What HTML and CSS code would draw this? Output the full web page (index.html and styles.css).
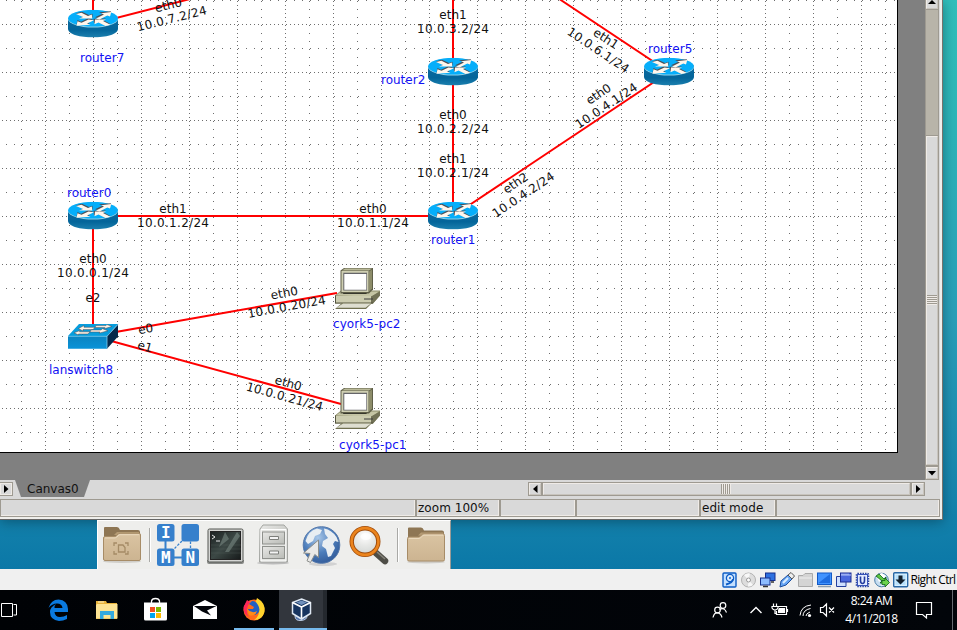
FILE: index.html
```html
<!DOCTYPE html>
<html lang="en">
<head>
<meta charset="utf-8">
<title>Network canvas</title>
<link rel="stylesheet" href="styles.css">
</head>
<body>
<main class="guest">
  <section class="app">
    <div class="work">
      <div class="viewport">
        <svg class="canvas" width="925" height="480" viewBox="0 0 925 480">
          <defs>
            <pattern id="grid" width="48" height="48" patternUnits="userSpaceOnUse">
              <g stroke="#6e6e6e" fill="none" shape-rendering="crispEdges">
                <path d="M45.5 1V48M2 24.5H48" stroke-dasharray="1 3"/>
                <path d="M21.5 1V48M6 .5H48" stroke-dasharray="1 7"/>
              </g>
            </pattern>
            <linearGradient id="side" x1="0" x2="0" y1="0" y2="1"><stop offset="0" stop-color="#0c6aa0"/><stop offset=".6" stop-color="#04659a"/><stop offset="1" stop-color="#1b7fae"/></linearGradient>
            <linearGradient id="face" x1="0" x2="0" y1="0" y2="1"><stop offset="0" stop-color="#0b83c0"/><stop offset="1" stop-color="#0a93d8"/></linearGradient>
            <symbol id="router" viewBox="0 0 50 28">
              <path d="M0 9V19C0 30.500 50 30.500 50 19V9Z" fill="url(#side)"/>
              <ellipse cx="25" cy="9.200" rx="25" ry="8.700" fill="#8ed0e8"/>
              <ellipse cx="25" cy="8.500" rx="24.800" ry="8.400" fill="#06aefa"/>
              <g fill="#4b5058">
                <path d="M8 3.600 14 2 21 5.400 24.500 4V8L12 7.800 15 6.700Z"/>
                <path d="M27 7.600 34.500 4 31 2.600 43 1.500 41.500 6 38 4.600 31 8.500Z"/>
                <path d="M20 8.600 13 12 9.500 10.200 8.500 15 22 14 18 12.600 25 9.600Z"/>
                <path d="M25.500 9 38 8.800 35 10.400 42 14 37 15.500 30 12 26 13.500Z"/>
              </g>
              <g fill="#fff6ec">
                <path d="M8 4.400 13.500 3 20 6.200 23.800 4.700 24.300 8.800 11 8.900 15 7.400Z"/>
                <path d="M28 8.700 36 4.900 33 3.500 43.300 2.200 42 6.800 39.300 5.700 31.500 9.700Z"/>
                <path d="M20.500 9.700 13.500 13 9.500 11.600 8.500 16 22.500 15.100 19 13.800 26 10.500Z"/>
                <path d="M27 9.900 38 9.700 35 11.300 42.500 15 37.500 16.300 30.500 12.900 26.500 14.500Z"/>
              </g>
            </symbol>
            <symbol id="pc" viewBox="0 0 46 43">
              <path d="M0 28 6 23H45V28L38 36H0Z" fill="#8b8b68"/>
              <path d="M1 28 6 24H44L37 29Z" fill="#c4c4a4"/>
              <path d="M8 26.500H31L35.500 23V21H10Z" fill="#111"/>
              <path d="M5.500 3 9 .5H38V22L34 26H5.500Z" fill="#5f5f48"/>
              <path d="M7 3 10 1H37L34 3Z" fill="#b9b998"/>
              <path d="M34 4 37 2V21L34 24Z" fill="#8c8c69"/>
              <path d="M6.500 3.500H33.500V24.500H6.500Z" fill="#cfcfb2"/>
              <path d="M8.300 5.300H32V23H8.300Z" fill="#66666a"/>
              <path d="M9.300 6.500H31.300V22.300H9.300Z" fill="#fff"/>
              <path d="M1 28.500H36V35.500H1Z" fill="#cdcdb0"/>
              <path d="M36 29 45 24V28L38 36H36Z" fill="#717156"/>
              <path d="M1 35.500H38M.5 28V36" stroke="#55553f"/>
              <path d="M29 31.500H38" stroke="#3d3d3d"/>
              <path d="M7 35.500H37L31 41.500H0Z" fill="#70704f"/>
              <path d="M8 36H36L30.500 40.200H1.500Z" fill="#deded0"/>
            </symbol>
          </defs>
          <rect width="898" height="453" fill="#000"/>
          <rect width="897" height="452" fill="#fff"/>
          <rect width="896" height="451" fill="url(#grid)"/>
          <path class="link" d="M93 0V24L190-1M453 0V216H93V336L337 293M93 336 341 404M453 216 669 72 560-.5"/>
          <g class="iface">
            <g transform="translate(170 12) rotate(-14)"><text y="-3">eth0</text><text y="11" textLength="71.500">10.0.7.2/24</text></g>
            <g transform="translate(453 22)"><text y="-3">eth1</text><text y="11" textLength="72">10.0.3.2/24</text></g>
            <g transform="translate(453 122)"><text y="-3">eth0</text><text y="11" textLength="72">10.0.2.2/24</text></g>
            <g transform="translate(453 166)"><text y="-3">eth1</text><text y="11" textLength="72">10.0.2.1/24</text></g>
            <g transform="translate(602 44.500) rotate(33.700)"><text y="-3">eth1</text><text y="11" textLength="71.500">10.0.6.1/24</text></g>
            <g transform="translate(602.500 100) rotate(-33.700)"><text y="-3">eth0</text><text y="11" textLength="71.500">10.0.4.1/24</text></g>
            <g transform="translate(519.500 189) rotate(-33.700)"><text y="-3">eth2</text><text y="11" textLength="71.500">10.0.4.2/24</text></g>
            <g transform="translate(173 216)"><text y="-3">eth1</text><text y="11" textLength="72">10.0.1.2/24</text></g>
            <g transform="translate(373 216)"><text y="-3">eth0</text><text y="11" textLength="72">10.0.1.1/24</text></g>
            <g transform="translate(93 266)"><text y="-3">eth0</text><text y="11" textLength="72">10.0.0.1/24</text></g>
            <g transform="translate(285.500 300) rotate(-10.300)"><text y="-3">eth0</text><text y="11" textLength="79">10.0.0.20/24</text></g>
            <g transform="translate(286.500 390) rotate(15.300)"><text y="-3">eth0</text><text y="11" textLength="79">10.0.0.21/24</text></g>
            <text x="93" y="302">e2</text>
            <text transform="translate(146.300 333) rotate(-10.300)">e0</text>
            <text transform="translate(144 350.500) rotate(15.300)">e1</text>
          </g>
          <use href="#router" x="68" y="9.700" width="50" height="28"/>
          <use href="#router" x="428" y="57.700" width="50" height="28"/>
          <use href="#router" x="644" y="57.700" width="50" height="28"/>
          <use href="#router" x="68" y="201.700" width="50" height="28"/>
          <use href="#router" x="428" y="201.700" width="50" height="28"/>
          <use href="#pc" x="335" y="267.500" width="46" height="43"/>
          <use href="#pc" x="335" y="387.500" width="46" height="43"/>
          <g>
            <path d="M107 336 118 324V336.500L107 348.700Z" fill="#06284a"/>
            <path d="M68 336H107V348.700H68Z" fill="url(#face)"/>
            <path d="M68 336 79 324H118L107 336Z" fill="#079ddd"/>
            <path d="M68 336.300H107L118 324.500M107 336V348" stroke="#7fcdf0" fill="none" stroke-width=".8"/>
            <g fill="#fff3e6" stroke="#4b4b55" stroke-width=".5">
              <path d="M78.500 328.500 84 325.500V327.300H95L93 329.600H83V331Z"/>
              <path d="M96 325.600H106L107 324.600 112 326.500 104 328.800 105 327.600H95Z"/>
              <path d="M74 332.800 80 330.500 79.500 331.800H90L88 334H78.500V335Z"/>
              <path d="M91 330H101L102.500 328.700 108 330.800 99 333.200 100 332H90Z"/>
            </g>
          </g>
          <g class="node-name">
            <text x="80" y="62">router7</text><text x="67" y="197">router0</text>
            <text x="381" y="84">router2</text><text x="648" y="53">router5</text>
            <text x="431" y="244">router1</text><text x="49" y="374">lanswitch8</text>
            <text x="333" y="328" textLength="67.500">cyork5-pc2</text><text x="339" y="449" textLength="67.500">cyork5-pc1</text>
          </g>
        </svg>
      </div>
      <div class="vscroll">
        <div class="btn up"><svg width="8" height="5" viewBox="0 0 8 5"><path d="M4 0 8 4H0Z"/></svg></div>
        <div class="trough"></div>
        <div class="thumb"><i></i><i></i><i></i><i></i><i></i></div>
        <div class="btn"><svg width="8" height="5" viewBox="0 0 8 5"><path d="M0 0H8L4 4.500Z"/></svg></div>
      </div>
    </div>
    <div class="tabs">
      <div class="btn next"><svg width="5" height="8" viewBox="0 0 5 8"><path d="M0 0 4.500 4 0 8Z"/></svg></div>
      <div class="tab">Canvas0</div>
      <div class="hscroll">
        <div class="btn"><svg width="5" height="8" viewBox="0 0 5 8"><path d="M4.500 0V8L0 4Z"/></svg></div>
        <div class="thumb"><i></i><i></i><i></i><i></i><i></i></div>
        <div class="btn"><svg width="5" height="8" viewBox="0 0 5 8"><path d="M0 0 4.500 4 0 8Z"/></svg></div>
      </div>
    </div>
    <div class="status">
      <span></span><span class="label">zoom 100%</span><span></span><span></span><span class="label">edit mode</span><span></span>
    </div>
  </section>
  <nav class="dock">
    <svg width="352" height="49" viewBox="98 520 352 49">
      <defs>
        <linearGradient id="fold" x1="0" x2="0" y1="0" y2="1"><stop offset="0" stop-color="#dac4a2"/><stop offset="1" stop-color="#ccb491"/></linearGradient>
        <linearGradient id="metal" x1="0" x2="1" y1="0" y2="1"><stop offset="0" stop-color="#e8e8e6"/><stop offset="1" stop-color="#b9bbb6"/></linearGradient>
        <linearGradient id="term" x1="0" x2="1" y1="0" y2="1"><stop offset="0" stop-color="#1b2121"/><stop offset=".5" stop-color="#3c4845"/><stop offset="1" stop-color="#171b1b"/></linearGradient>
        <radialGradient id="globe" cx=".4" cy=".3" r=".7"><stop offset="0" stop-color="#a9c7e8"/><stop offset=".6" stop-color="#4c7dbb"/><stop offset="1" stop-color="#355f9d"/></radialGradient>
        <radialGradient id="lens" cx=".5" cy=".3" r=".7"><stop offset="0" stop-color="#fff"/><stop offset=".5" stop-color="#e7e8e6"/><stop offset="1" stop-color="#d2d6d4"/></radialGradient>
        <symbol id="folder" viewBox="0 0 40 38">
          <ellipse cx="20" cy="35.500" rx="19" ry="1.500" fill="#cfcdc8"/>
          <path d="M2 24V2Q2 1 3 1H15Q17 1 18 4H36Q38 4 38 6V24Z" fill="#8e7654"/>
          <path d="M12 9 15 6H37V10Z" fill="#b59b74"/>
          <path d="M1.500 33V12Q1.500 10.500 3 10.500H12.500Q14 10.500 15 9T18 7.300H37Q38.500 7.300 38.500 9V33Q38.500 34.500 37 34.500H3Q1.500 34.500 1.500 33Z" fill="url(#fold)" stroke="#a78c67"/>
          <path d="M3 12H13Q15 11.500 16 10T18 8.700H37" stroke="#ead9bd" fill="none"/>
        </symbol>
      </defs>
      <use href="#folder" x="102" y="526" width="40" height="38"/>
      <path d="M114 546V543H117M125 543H128V546M114 551V554H117M125 554H128V551M118.500 545H123L125 547.500V552H118.500Z" stroke="#a58b66" stroke-width="1.300" fill="none"/>
      <path d="M149.500 528V562M397.500 528V562" stroke="#a9a9a6"/><path d="M150.500 528V562M398.500 528V562" stroke="#fff"/>
      <g fill="#3680cc"><rect x="157" y="524" width="17.500" height="17.500" rx="2.500"/><rect x="181.500" y="524" width="17.500" height="17.500" rx="2.500"/><rect x="157" y="548.500" width="17.500" height="17.500" rx="2.500"/><rect x="181.500" y="548.500" width="17.500" height="17.500" rx="2.500"/></g>
      <path d="M165.500 541V549M174 557.500H182" stroke="#3680cc" stroke-width="2" fill="none"/><path d="M190.500 541.500V549M182 541 174 549" stroke="#3680cc" stroke-width="1.300" stroke-dasharray="2.500 1.500" fill="none"/>
      <g class="core-letter"><text x="165.700" y="538.300">I</text><text x="165.700" y="563">M</text><text x="190.300" y="563">N</text></g>
      <path d="M207 560H244V562Q244 564 242 564H209Q207 564 207 562Z" fill="#898b88"/><rect x="208" y="529" width="35" height="33" rx="1.500" fill="#d4d5d3" stroke="#555753"/><rect x="210.500" y="531.500" width="30" height="28" fill="url(#term)" stroke="#222"/>
      <path d="M225 532 219 547 229 539ZM237 532 225 552 229 552 240 536Z" fill="#8fa09a" opacity=".45"/><path d="M212 535 215 537 212 539M216 541H220" stroke="#e5e5e5" fill="none"/><path d="M211 545H241M211 549H241M211 553H241" stroke="#65736c" opacity=".25"/>
      <ellipse cx="273" cy="563" rx="16" ry="1.500" fill="#bbb"/><path d="M260 529 263 525H284L287.500 529V562H259.500Z" fill="url(#metal)" stroke="#a3a5a1"/><path d="M261 529.500H286V561H261Z" fill="#e4e5e2" stroke="#fff"/>
      <g fill="url(#metal)" stroke="#8f918d"><rect x="262.500" y="532" width="22" height="12"/><rect x="262.500" y="546.500" width="22" height="12"/></g>
      <path d="M269.500 536.500V539.500H278.500V536.500ZM269.500 551V554H278.500V551Z" fill="#f4f4f4" stroke="#7d7f7b"/>
      <ellipse cx="323" cy="564" rx="14" ry="2" fill="#d2d2d2"/><circle cx="321.500" cy="545" r="18.300" fill="url(#globe)" stroke="#5377aa"/>
      <path d="M305.500 541Q308 531 317 528.500L322 530 320 534 315 536 313 541 308 544ZM324 528.500Q332 530 336.500 537L338.500 542 335 541 333 544 335 548 331 556 328 557 326 549 322 546 323 541 328 538 325 534Z" fill="#e9eef2"/>
      <path d="M318.500 540V557.500L314.800 554.500 310.500 562.500 307 560.800 310 553.500 303.500 553Z" fill="#e9e9e8" stroke="#8b8d8a"/>
      <path d="M376 553 385 561" stroke="#4e4d46" stroke-width="6.500" stroke-linecap="round"/><path d="M377 552 385 559" stroke="#85837a" stroke-width="1.500"/>
      <circle cx="365" cy="541.500" r="13.300" fill="url(#lens)" stroke="#a14d0c" stroke-width="4.400"/><circle cx="365" cy="541.500" r="13.400" fill="none" stroke="#eb841d" stroke-width="2.600"/><ellipse cx="366" cy="536.500" rx="5.500" ry="3.500" fill="#fff" opacity=".7"/>
      <use href="#folder" x="406" y="526.500" width="40" height="38"/>
    </svg>
  </nav>
</main>
<div class="vmbar">
  <svg viewBox="0 0 16 16"><rect x="1" y="1" width="13" height="14" rx="1" fill="#c4e0ff" stroke="#0d5cc5" stroke-width="1.400"/><circle cx="8" cy="6" r="3.600" fill="#e5f2ff" stroke="#0d5cc5" stroke-width="1.300"/><path d="M11 7Q10.500 11 4 12.500" stroke="#0d5cc5" stroke-width="2" fill="none"/><circle cx="8" cy="6" r="1.200" fill="#3b83dc"/></svg>
  <svg viewBox="0 0 16 16"><circle cx="7.500" cy="8" r="7" fill="#ddd" stroke="#b2b2b2"/><path d="M7.500 8 3 3A7 7 0 0 1 9 1.500ZM7.500 8 12 13A7 7 0 0 1 7 14.500Z" fill="#f8f8f8"/><circle cx="7.500" cy="8" r="2" fill="#fff" stroke="#999"/></svg>
  <svg viewBox="0 0 16 16"><rect x="5.500" y="1" width="9.500" height="7.500" fill="#2e70e0" stroke="#142f8c"/><rect x=".5" y="6" width="9.500" height="7" fill="#8dbcff" stroke="#142f8c"/><path d="M3 14.500H8M11 10H14" stroke="#333" stroke-width="1.500"/></svg>
  <svg viewBox="0 0 16 16"><path d="M1 15 2 9 9 3 13 7 7 13Z" fill="#65a4f5" stroke="#1c4e9e"/><path d="M9 3 12 .5 15.500 4 13 7Z" fill="#eee" stroke="#555"/><path d="M4 11 9 6" stroke="#d8ecff" stroke-width="2"/></svg>
  <svg viewBox="0 0 16 16"><path d="M.5 14.500V3.500H5L7 1.500H14.500V14.500Z" fill="#d4d4d4" stroke="#aaa"/><path d="M1 6H14" stroke="#eee"/></svg>
  <svg viewBox="0 0 16 16"><rect x=".5" y="1" width="14" height="11.500" fill="#4193ff" stroke="#1259c5"/><path d="M1.500 11 13 2V11Z" fill="#1e6de1"/><path d="M1 14.500H14" stroke="#8b9cae" stroke-width="1.500"/></svg>
  <svg viewBox="0 0 16 16"><path d="M.5 4.500H10V14.500H.5Z" fill="#cfe0ff" stroke="#243f9c"/><rect x="4.500" y="1" width="10.500" height="9" fill="#4a67dd" stroke="#1d2e92"/><path d="M5 3H15M6 1.500V3M8 1.500V3M10 1.500V3M12 1.500V3" stroke="#b6c7fa"/></svg>
  <svg viewBox="0 0 16 16"><rect x="1.500" y="1.500" width="12" height="13" rx="1" fill="#dce7ff" stroke="#2b439f" stroke-width="1.500" stroke-dasharray="1.500 1"/><rect x="2.500" y="2.500" width="10" height="11" fill="#e4ecff" stroke="#3954b9"/><path d="M5.500 4.500V8.500Q5.500 11.500 7.500 11.500T9.500 8.500V4.500" stroke="#233b9e" stroke-width="1.600" fill="none"/></svg>
  <svg viewBox="0 0 16 16"><circle cx="7.500" cy="8" r="6.800" fill="#c7ddf0" stroke="#4b7eaa"/><path d="M2 3 8 1 12 4 8 7 5 10ZM7 14 10 9 14 11Z" fill="#fff"/><path d="M2 4 5 2 10 7 12 5V11H6L8 9Z" fill="#5ec743" stroke="#0b5f18" stroke-width=".8"/><path d="M11 6 15.500 10.500 11 15V12.500H8V8.500H11Z" fill="#6bd34c" stroke="#0b5f18" stroke-width=".8"/></svg>
  <svg viewBox="0 0 16 16"><rect x=".7" y=".8" width="14" height="14" rx="1" fill="#d7f0ff" stroke="#2867a5" stroke-width="1.400"/><rect x="2.500" y="2.800" width="10" height="10" fill="#b6dffa"/><path d="M5.500 3.500H9.500V7.500H12.500L7.500 12.500 2.500 7.500H5.500Z" fill="#12202c"/></svg>
  <span>Right Ctrl</span>
</div>
<footer class="taskbar">
  <svg width="34" viewBox="0 590 34 40"><path d="M1.500 603.500H12.500V616.500H1.500ZM13.500 604.500H16.500V615H13.500" fill="none" stroke="#fff"/></svg>
  <svg width="49" viewBox="34 590 49 40"><path d="M48.500 608Q51 599.500 58.500 599.500Q67.500 600 68 609V612H54.500Q55 617 60 617Q64 617 67 615V619Q63 621 59 621Q50 620 50 612Q50 607 56 604Q54 606 54.500 608H62.500Q62 603.500 57 603.500Q52 603.500 48.500 608Z" fill="#0a7ae0"/></svg>
  <svg width="49" viewBox="83 590 49 40"><path d="M96 601H106L107 603H117V619H96Z" fill="#e8b33b"/><path d="M97 604H117.500V618.500H96V605Z" fill="#fde494"/><path d="M100 619V611H114V619H110.500V615H103.500V619Z" fill="#34a9df"/><path d="M98 602H104" stroke="#fff3c6"/></svg>
  <svg width="49" viewBox="132 590 49 40"><path d="M151.500 603V601Q152 598.500 155.500 598.500T159.500 601V603" stroke="#fff" fill="none" stroke-width="1.300"/><path d="M144 602.500H167V619Q167 620.500 165.500 620.500H145.500Q144 620.500 144 619Z" fill="#fff"/><path d="M150 607H155V612H150Z" fill="#f25022"/><path d="M156 607H161V612H156Z" fill="#7fba00"/><path d="M150 613H155V618H150Z" fill="#00a4ef"/><path d="M156 613H161V618H156Z" fill="#ffb900"/></svg>
  <svg width="49" viewBox="181 590 49 40"><path d="M193 606 205 600 217 606V619H193Z" fill="#fff"/><path d="M194 606H216.500L207 610.500 211 615.500 202 611.500Z" fill="#020409"/></svg>
  <svg width="49" viewBox="230 590 49 40"><circle cx="254" cy="610" r="10.500" fill="#ff6a1b"/><path d="M257 598Q266 603 264.500 612Q262 620 254 620Q260 616 259 609L255 604Z" fill="#ffd42d"/><path d="M243.500 607 247 600 250 602Q244 611 249 617Q243 614 243.500 607Z" fill="#ff2757"/><path d="M249 604 252 601Q256 601 258 605Q262 612 255 615Q249 615 248 609L253 609 254 607Z" fill="#225fc2"/><path d="M247 609Q252 614 257 611Q255 617 249 615Z" fill="#ff8a18"/><path d="M234 629H274" stroke="#76b9ed" stroke-width="2"/></svg>
  <svg width="48" viewBox="279 590 48 40"><path d="M279 590H323V630H279Z" fill="#32363d"/><path d="M323 590H327V630H323Z" fill="#24282e"/><path d="M295 616Q295 621 301 620.500T307 616" fill="#5272a8" stroke="#b9c8de"/><path d="M301.500 599 310.500 602.500V613.500L301.500 619 292.500 613.500V602.500Z" fill="#17345f" stroke="#dfe8f3" stroke-width="1.500"/><path d="M292.500 602.500 301.500 607 310.500 602.500M301.500 607V618" stroke="#fff" stroke-width="1.600" fill="none"/><path d="M296 602.500 301.500 600.500 307 602.500 301.500 605Z" fill="#6f8fbb"/><path d="M279 629H327" stroke="#76b9ed" stroke-width="2"/></svg>
  <svg class="tray" width="142" viewBox="700 590 142 40"><g stroke="#fff" fill="none" stroke-width="1.200"><circle cx="723" cy="605.500" r="2.800"/><path d="M719.500 609.500Q724.500 607 726.500 612.500"/><circle cx="717.500" cy="610" r="2.800"/><path d="M713 617.500Q714 612.500 717.500 612.800T722 617.500"/><path d="M750.500 613 756 607.500 761.500 613" stroke-width="1.400"/><path d="M777.500 606.500H786.500V614.500H776.500V611M787.500 609V612M773.500 603.500V606M776.500 603.500V606M772 606.500H778V608Q777 610 775 610T772 608ZM775 610V613.500H776.500"/><path d="M820.500 607.500H823L826.500 604V616L823 612.500H820.500ZM829 607.500 834 612.500M834 607.500 829 612.500"/><path d="M806 616Q806 613.500 810 612M803 616Q803 610 810.500 608.500M800 615.500Q801 606 811 605" stroke-width="1"/></g><path d="M779 608H785V613H778V610Z" fill="#fff"/><circle cx="809.500" cy="615.500" r="1.600" fill="#fff"/></svg>
  <div class="clock"><span>8:24 AM</span><span>4/11/2018</span></div>
  <svg width="57" viewBox="900 590 57 40"><path d="M916.500 602.500H931.500V614.500H926.500V618L922.500 614.500H916.500Z" fill="none" stroke="#fff" stroke-width="1.200"/><path d="M952.500 590V630" stroke="#666a70"/></svg>
</footer>
</body>
</html>
```
FILE: styles.css
```css
* { box-sizing: border-box; }
body {
  margin: 0;
  width: 957px;
  height: 630px;
  overflow: hidden;
  display: flex;
  flex-direction: column;
  font: 12px "DejaVu Sans", sans-serif;
  color: #111;
}
svg { display: block; }

.guest {
  height: 569px;
  overflow: hidden;
  background: linear-gradient(#31bfbb 0, #2ebab9 80px, #299fb9 320px, #1684ad 500px, #0b78a7 569px);
}
.app {
  width: 943px;
  height: 520px;
  background: #d9d9d9;
  border-right: 1px solid #77736c;
  border-bottom: 1px solid #666;
  box-shadow: inset -2px -2px #efeeeb, 0 2px 12px rgba(0, 35, 50, .45);
}
.work { display: flex; height: 480px; }
.viewport { width: 925px; background: #808080; }
.link { fill: none; stroke: #f00; stroke-width: 2; }
.iface { fill: #111; text-anchor: middle; }
.node-name { fill: #1212f4; }

.vscroll {
  width: 14px;
  display: flex;
  flex-direction: column;
  border: solid #9e9a91;
  border-width: 0 1px 1px;
}
.btn {
  display: flex;
  align-items: center;
  justify-content: center;
  background: #d9d9d9;
  border: 1px solid;
  border-color: #efebe7 #c8c4bd #c8c4bd #efebe7;
}
.vscroll .btn { height: 12px; }
.vscroll .up { height: 9px; border-top: 0; padding-bottom: 3px; }
.trough { height: 127px; background: #b8b4a9; border: solid #9e9a91; border-width: 1px 0; }
.thumb {
  flex: 1;
  display: flex;
  align-items: center;
  justify-content: center;
  background: #d9d9d9;
  border: 1px solid;
  border-color: #efebe7 #c8c4bd #c8c4bd #efebe7;
}
.vscroll .thumb { flex-direction: column; margin-bottom: 2px; padding-bottom: 2px; box-shadow: 0 2px #9e9a91; }
.thumb i { background: #9e9a91; }
.vscroll i { width: 10px; height: 1px; margin-bottom: 1px; box-shadow: 0 1px #efebe7; }
.hscroll i { width: 1px; height: 10px; margin-right: 1px; box-shadow: 1px 0 #efebe7; }

.tabs { display: flex; height: 19px; }
.next { width: 14px; height: 14px; margin: 2px 2px 0 -1px; box-shadow: inset 0 0 0 1px #efebe7; border-color: #9e9a91; }
.tab {
  width: 75px;
  height: 17px;
  padding-left: 12px;
  line-height: 18px;
  background: #808080;
  clip-path: polygon(0 0, 100% 0, 92% 100%, 8% 100%);
}
.hscroll {
  display: flex;
  width: 397px;
  height: 14px;
  margin: 2px 0 0 438px;
  border: 1px solid #9e9a91;
}
.hscroll .btn { width: 12px; }
.hscroll .thumb { margin: 0 2px; padding-right: 2px; box-shadow: -2px 0 #9e9a91, 2px 0 #9e9a91; }

.status { display: grid; grid-template-columns: 416px 84px 76px 124px 76px 164px; height: 18px; margin-right: 2px; }
.status span {
  line-height: 16px;
  border: 1px solid #9e9a91;
  box-shadow: inset -1px -1px #efebe7;
}
.status .label { padding-left: 1px; letter-spacing: .05px; }

.dock {
  position: relative;
  width: 354px;
  height: 49px;
  margin-left: 97px;
  background: #eeeeec;
  border: solid #fff;
  border-width: 1px 1px 0;
  border-right-color: #9a9a96;
}
.dock svg { margin: -1px 0 0 -.5px; }
.core-letter { font: bold 16px "DejaVu Sans Mono", monospace; fill: #fff; text-anchor: middle; }

.vmbar {
  display: flex;
  align-items: center;
  gap: 3.1px;
  height: 21px;
  padding-left: 721.5px;
  background: #f0f0f0;
  color: #000;
}
.vmbar svg { flex: none; width: 16px; height: 16px; }
.vmbar span { font: 12px "Open Sans", sans-serif; letter-spacing: -.65px; white-space: nowrap; margin-left: -2px; }

.taskbar { display: flex; height: 40px; background: linear-gradient(90deg, #000205, #02050a); }
.taskbar svg { flex: none; height: 40px; }
.tray { margin-left: auto; }
.clock {
  width: 58px;
  padding: 2px 0 0 1px;
  display: flex;
  flex-direction: column;
  align-items: center;
  color: #fff;
  font: 12px/18px "Open Sans", sans-serif;
  letter-spacing: -.5px;
}
```
